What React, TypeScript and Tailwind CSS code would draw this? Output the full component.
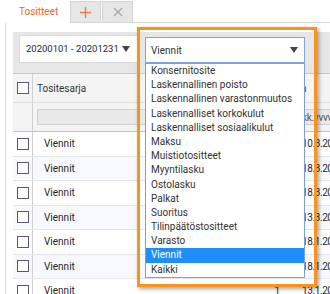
import React from "react";

const options = [
  "Konsernitosite",
  "Laskennallinen poisto",
  "Laskennallinen varastonmuutos",
  "Laskennalliset korkokulut",
  "Laskennalliset sosiaalikulut",
  "Maksu",
  "Muistiotositteet",
  "Myyntilasku",
  "Ostolasku",
  "Palkat",
  "Suoritus",
  "Tilinpäätöstositteet",
  "Varasto",
  "Viennit",
  "Kaikki",
];

const rows = [
  { nro: "", date: "10.3.2020" },
  { nro: "", date: "18.3.2020" },
  { nro: "", date: "18.3.2020" },
  { nro: "", date: "13.3.2020" },
  { nro: "", date: "18.1.2020" },
  { nro: "", date: "18.1.2020" },
  { nro: "1", date: "13.1.2020" },
];

function Checkbox() {
  return <span className="block w-[12px] h-[12px] border border-[#5e5478] bg-white" />;
}

function Caret() {
  return (
    <svg width="8" height="6" viewBox="0 0 8 6" className="shrink-0">
      <path d="M0 0H8L4 6Z" fill="#444" />
    </svg>
  );
}

export default function App() {
  return (
    <div className="relative w-[330px] h-[294px] overflow-hidden bg-white font-['Roboto',sans-serif] text-[10px] text-[#1f1f2e]">
      {/* tabs */}
      <div className="flex h-[23px]">
        <div className="w-[70px] flex items-center pl-[19px] text-[10px] text-[#f26a21]">Tositteet</div>
        <div className="flex flex-1 border-b border-[#d6d6d6]">
          <div className="w-[31px] mt-[1px] bg-[#e6e6e6] border border-b-0 border-[#d4d4d4] flex items-center justify-center">
            <svg width="11" height="11" viewBox="0 0 11 11">
              <path d="M5.5 0V11M0 5.5H11" stroke="#f47a4c" strokeWidth="1.4" />
            </svg>
          </div>
          <div className="w-[31px] mt-[1px] ml-[1px] bg-[#e6e6e6] border border-b-0 border-[#d4d4d4] flex items-center justify-center">
            <svg width="10" height="10" viewBox="0 0 10 10">
              <path d="M1 1L9 9M9 1L1 9" stroke="#a8a8a8" strokeWidth="1.3" />
            </svg>
          </div>
        </div>
      </div>

      <div className="ml-[5px] border-l border-[#dcdcdc] pl-[7px] pt-[9px] h-[271px]">
        {/* toolbar */}
        <div className="h-[41px] bg-[#e6e6e6] flex items-start pt-[3px] pl-[6px] gap-[6px]">
          <div className="w-[120px] h-[28px] bg-white border border-[#dadada] flex items-center justify-between pl-[6px] pr-[8px] whitespace-nowrap">
            <span className="text-[9.5px]">20200101 - 20201231</span>
            <Caret />
          </div>
          <div className="relative mt-[2px] w-[160px] h-[26px] bg-white border border-[#80a6d8] flex items-center justify-between pl-[5px] pr-[6px]">
            <span className="text-[#333]">Viennit</span>
            <Caret />
            <ul className="absolute left-[-1px] top-[25px] z-10 w-[160px] bg-white border border-[#7f9fd4]">
              {options.map((o) => (
                <li
                  key={o}
                  className={
                    o === "Viennit"
                      ? "h-[14.2px] leading-[14.2px] pl-[5px] bg-[#1e8ffa] text-white"
                      : "h-[14.2px] leading-[14.2px] pl-[5px] text-[#333]"
                  }
                >
                  {o}
                </li>
              ))}
            </ul>
          </div>
        </div>

        {/* table */}
        <div className="w-[339px] border-t border-[#c8c8c8]">
          <div className="flex h-[29px] bg-[#f4f4f4] border-b border-[#dcdcdc]">
            <div className="w-[20px] border-r border-[#cfcfcf] flex items-center justify-center">
              <Checkbox />
            </div>
            <div className="w-[207px] flex items-center pl-[4px] text-[#333]">Tositesarja</div>
            <div className="w-[45px] flex items-center pl-[25px] whitespace-nowrap text-[#333]">Tositteen</div>
            <div className="flex-1" />
          </div>
          <div className="flex h-[29px] bg-[#f4f4f4] border-b border-[#b9c3d1]">
            <div className="w-[20px] border-r border-[#cfcfcf]" />
            <div className="w-[207px] flex items-center px-[4px]">
              <div className="w-full h-[16px] bg-[#e9e9e9] border border-[#d0d0d0]" />
            </div>
            <div className="w-[45px]" />
            <div className="flex-1 flex items-center pl-[2px] pr-[2px]">
              <div className="w-full h-[16px] bg-[#e9e9e9] border border-[#d0d0d0] flex items-center pl-[1px] text-[#555] whitespace-nowrap tracking-[-0.3px]">
                pp.kk.vvvv
              </div>
            </div>
          </div>
          {rows.map((r, i) => (
            <div
              key={i}
              className={
                i % 2 === 1
                  ? "flex h-[24.5px] bg-[#f7f9fc] border-b border-[#e2e4e8]"
                  : "flex h-[24.5px] bg-white border-b border-[#e2e4e8]"
              }
            >
              <div className="w-[20px] border-r border-[#cfcfcf] flex items-center justify-center">
                <Checkbox />
              </div>
              <div className="w-[207px] flex items-center pl-[11px]">Viennit</div>
              <div className="w-[45px] flex items-center justify-end pr-[5px]">{r.nro}</div>
              <div className="flex-1 flex items-center pl-[17px] whitespace-nowrap tracking-[-0.4px]">{r.date}</div>
            </div>
          ))}
        </div>
      </div>

      {/* highlight frame */}
      <div className="pointer-events-none absolute left-[137px] top-[27px] z-20 w-[180px] h-[260px] border-[3px] border-[#f7931e] shadow-[2px_2px_4px_rgba(0,0,0,0.35)]" />
    </div>
  );
}
